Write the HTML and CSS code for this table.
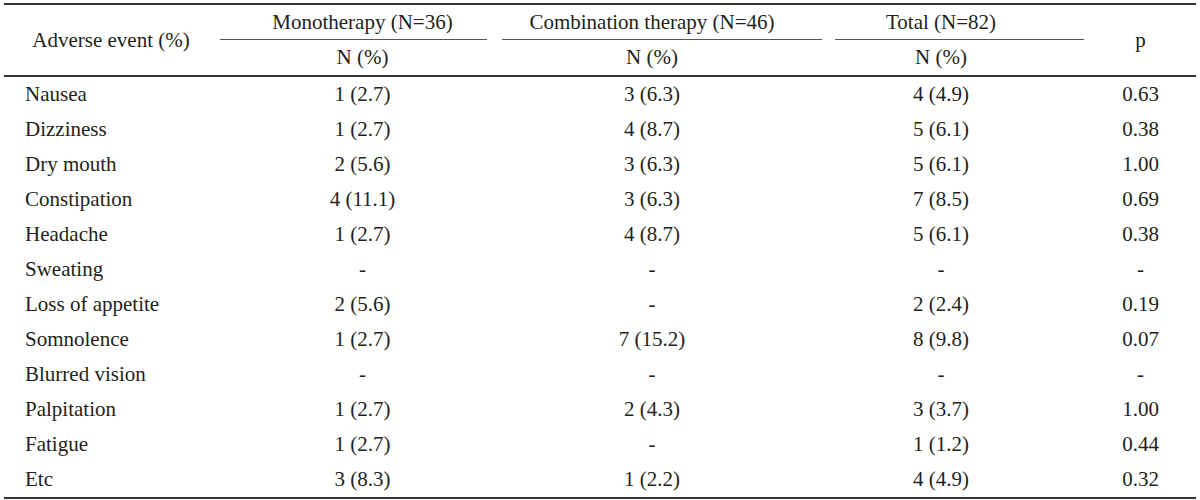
FILE: index.html
```html
<!DOCTYPE html>
<html lang="en">
<head>
<meta charset="utf-8">
<title>Adverse events</title>
<link rel="stylesheet" href="styles.css">
</head>
<body>
<table class="ae-table">
  <colgroup>
    <col class="c-label">
    <col class="c-mono">
    <col class="c-combo">
    <col class="c-total">
    <col class="c-p">
  </colgroup>
  <thead>
    <tr class="head-group">
      <th rowspan="2" class="head-span">Adverse event (%)</th>
      <th><div class="group-text">Monotherapy (N=36)</div><div class="group-rule rule-mono"></div></th>
      <th><div class="group-text">Combination therapy (N=46)</div><div class="group-rule rule-combo"></div></th>
      <th><div class="group-text">Total (N=82)</div><div class="group-rule rule-total"></div></th>
      <th rowspan="2" class="head-span">p</th>
    </tr>
    <tr class="head-sub">
      <th>N (%)</th>
      <th>N (%)</th>
      <th>N (%)</th>
    </tr>
  </thead>
  <tbody>
    <tr><td>Nausea</td><td>1 (2.7)</td><td>3 (6.3)</td><td>4 (4.9)</td><td>0.63</td></tr>
    <tr><td>Dizziness</td><td>1 (2.7)</td><td>4 (8.7)</td><td>5 (6.1)</td><td>0.38</td></tr>
    <tr><td>Dry mouth</td><td>2 (5.6)</td><td>3 (6.3)</td><td>5 (6.1)</td><td>1.00</td></tr>
    <tr><td>Constipation</td><td>4 (11.1)</td><td>3 (6.3)</td><td>7 (8.5)</td><td>0.69</td></tr>
    <tr><td>Headache</td><td>1 (2.7)</td><td>4 (8.7)</td><td>5 (6.1)</td><td>0.38</td></tr>
    <tr><td>Sweating</td><td>-</td><td>-</td><td>-</td><td>-</td></tr>
    <tr><td>Loss of appetite</td><td>2 (5.6)</td><td>-</td><td>2 (2.4)</td><td>0.19</td></tr>
    <tr><td>Somnolence</td><td>1 (2.7)</td><td>7 (15.2)</td><td>8 (9.8)</td><td>0.07</td></tr>
    <tr><td>Blurred vision</td><td>-</td><td>-</td><td>-</td><td>-</td></tr>
    <tr><td>Palpitation</td><td>1 (2.7)</td><td>2 (4.3)</td><td>3 (3.7)</td><td>1.00</td></tr>
    <tr><td>Fatigue</td><td>1 (2.7)</td><td>-</td><td>1 (1.2)</td><td>0.44</td></tr>
    <tr><td>Etc</td><td>3 (8.3)</td><td>1 (2.2)</td><td>4 (4.9)</td><td>0.32</td></tr>
  </tbody>
</table>
</body>
</html>
```

FILE: styles.css
```css
html, body {
  margin: 0;
  padding: 0;
  background: #ffffff;
}

body {
  padding: 3px 4px 0 4px;
  font-family: "Liberation Serif", "Times New Roman", serif;
  font-size: 21px;
  color: #231f20;
}

.ae-table {
  table-layout: fixed;
  width: 1192px;
  border-collapse: collapse;
  border-spacing: 0;
  border-top: 2px solid #333333;
  border-bottom: 2px solid #333333;
}

.c-label { width: 214px; }
.c-mono { width: 289px; }
.c-combo { width: 290px; }
.c-total { width: 288px; }
.c-p { width: 111px; }

.ae-table th,
.ae-table td {
  padding: 0;
  font-weight: normal;
  text-align: center;
  white-space: nowrap;
  vertical-align: top;
}

.ae-table thead {
  border-bottom: 2px solid #333333;
}

.head-span {
  vertical-align: middle !important;
  height: 68px;
}

.group-text {
  height: 34px;
  line-height: 34px;
}

.group-rule {
  height: 1px;
  background: #555555;
}

.rule-mono { margin: 0 20px 0 2px; }
.rule-combo { margin: 0 -25px 0 -5px; }
.rule-total { margin: 0 1px 0 38px; }

.head-sub th {
  height: 33px;
  line-height: 35px;
}

.ae-table tbody td {
  height: 35px;
  line-height: 35px;
}

.ae-table tbody td:first-child {
  text-align: left;
  padding-left: 21px;
}
```
